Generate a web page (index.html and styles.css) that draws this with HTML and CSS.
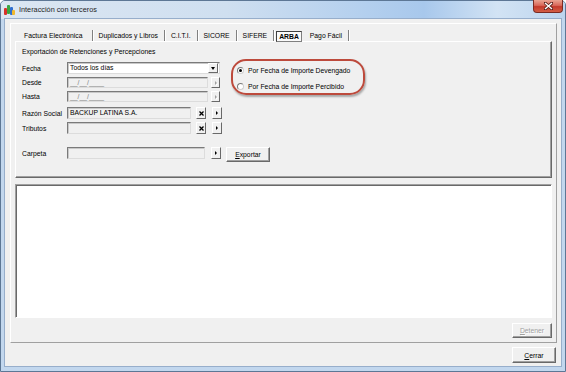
FILE: index.html
```html
<!DOCTYPE html>
<html lang="es">
<head>
  <meta charset="UTF-8" />
  <title>Interacción con terceros</title>
  <link rel="stylesheet" href="styles.css">
</head>
<body>
  <div class="window">
    <div class="titlebar">
      <svg class="app-icon" width="11" height="12" viewBox="0 0 11 12">
        <rect x="0" y="4" width="3" height="7" rx="1" fill="#d8322a"/>
        <rect x="3" y="1" width="3" height="9" rx="1" fill="#3aa641"/>
        <rect x="6" y="3" width="3" height="8" rx="1" fill="#2f6fd0"/>
        <rect x="8" y="6" width="3" height="5" rx="1" fill="#f1b92c"/>
      </svg>
      <span class="title">Interacción con terceros</span>
      <div class="close-btn">
        <svg width="9" height="8" viewBox="0 0 9 8">
          <path d="M1 1 L8 7 M8 1 L1 7" stroke="#5a1f1a" stroke-width="3" stroke-linecap="square"/>
          <path d="M1 1 L8 7 M8 1 L1 7" stroke="#fff" stroke-width="1.5"/>
        </svg>
      </div>
    </div>

    <div class="client">
      <div class="panel">
        <div class="tabs">
          <span class="tab first">Factura Electrónica</span>
          <span class="tab">Duplicados y Libros</span>
          <span class="tab">C.I.T.I.</span>
          <span class="tab">SICORE</span>
          <span class="tab">SIFERE</span>
          <span class="tab active"><b>ARBA</b></span>
          <span class="tab">Pago Fácil</span>
        </div>

        <div class="tab-page">
          <div class="caption">Exportación de Retenciones y Percepciones</div>

          <div class="form">
            <div class="fields">
              <div class="row r-fecha">
                <span class="label">Fecha</span>
                <div class="combo">
                  <span class="combo-text">Todos los días</span>
                  <span class="mini-btn drop"><i class="tri-down"></i></span>
                </div>
              </div>
              <div class="row r-date">
                <span class="label">Desde</span>
                <div class="field date">__/__/____</div>
                <span class="mini-btn off"><i class="tri-right"></i></span>
              </div>
              <div class="row r-date">
                <span class="label">Hasta</span>
                <div class="field date">__/__/____</div>
                <span class="mini-btn off"><i class="tri-right"></i></span>
              </div>
              <div class="row r-razon">
                <span class="label">Razón Social</span>
                <div class="field short">BACKUP LATINA S.A.</div>
                <span class="mini-btn clear">
                  <svg width="5" height="5" viewBox="0 0 5 5"><path d="M0.5 0.5 L4.5 4.5 M4.5 0.5 L0.5 4.5" stroke="#000" stroke-width="1.3"/></svg>
                </span>
                <span class="mini-btn"><i class="tri-right"></i></span>
              </div>
              <div class="row r-trib">
                <span class="label">Tributos</span>
                <div class="field short"></div>
                <span class="mini-btn clear">
                  <svg width="5" height="5" viewBox="0 0 5 5"><path d="M0.5 0.5 L4.5 4.5 M4.5 0.5 L0.5 4.5" stroke="#000" stroke-width="1.3"/></svg>
                </span>
                <span class="mini-btn"><i class="tri-right"></i></span>
              </div>
            </div>

            <div class="radio-box">
              <div class="radio-row"><span class="radio checked"></span>Por Fecha de Importe Devengado</div>
              <div class="radio-row"><span class="radio"></span>Por Fecha de Importe Percibido</div>
            </div>
          </div>

          <div class="row r-carpeta">
            <span class="label">Carpeta</span>
            <div class="field folder"></div>
            <span class="mini-btn"><i class="tri-right"></i></span>
            <button class="btn export"><u>E</u>xportar</button>
          </div>
        </div>

        <div class="memo"></div>

        <div class="actions">
          <button class="btn disabled"><u>D</u>etener</button>
        </div>
      </div>

      <div class="actions bottom">
        <button class="btn"><u>C</u>errar</button>
      </div>
    </div>
  </div>
</body>
</html>
```

FILE: styles.css
```css
:root {
  --face: #f0f0f0;
  --shadow: #a0a0a0;
  --dark: #696969;
  --light: #ffffff;
  --frame: #c2d7ee;
}

* {
  box-sizing: border-box;
}

body {
  margin: 0;
  background: #fff;
  font-family: "Liberation Sans", Arial, sans-serif;
  font-size: 6.8px;
  color: #000;
}

.window {
  width: 566px;
  height: 372px;
  border: 1px solid #5d7795;
  border-radius: 5px 5px 0 0;
  background: var(--frame);
  display: flex;
  flex-direction: column;
}

/* Barra de título */
.titlebar {
  height: 18px;
  display: flex;
  align-items: flex-start;
  background: linear-gradient(to right, #dbe6f2 0%, #cfdff0 40%, #b3cfee 65%, #a8c8ec 75%, #d2e3f4 88%, #bcd4ee 100%);
  border-radius: 4px 4px 0 0;
}

.app-icon {
  margin: 3px 0 0 3px;
}

.title {
  margin: 4px 0 0 4px;
  font-size: 7.3px;
  color: #1e1e1e;
}

.close-btn {
  margin-left: auto;
  margin-right: 2px;
  width: 30px;
  height: 13px;
  margin-top: -1px;
  border: 1px solid #7a2a22;
  border-top: none;
  border-radius: 0 0 4px 4px;
  background: linear-gradient(#e9a493 0%, #d9685a 45%, #c4392c 55%, #d35e45 100%);
  display: flex;
  align-items: center;
  justify-content: center;
}

/* Área cliente */
.client {
  margin: 0 4px;
  height: 347px;
  background: var(--face);
  box-shadow: 0 0 0 1px #97aecb;
  display: flex;
  flex-direction: column;
}

.panel {
  margin: 4px 4px 0 5px;
  padding: 6px 4px 4px 4px;
  border: 1px solid;
  border-color: var(--light) var(--shadow) var(--shadow) var(--light);
}

/* Pestañas */
.tabs {
  height: 11px;
  display: flex;
  align-items: stretch;
}

.tab {
  padding: 0 6px;
  line-height: 11px;
  border-right: 1px solid #808080;
  box-shadow: 1px 0 0 var(--light);
}

.tab.first {
  padding-left: 9px;
  padding-right: 9px;
}

.tab.active {
  padding: 0 2px;
  border-right: none;
  box-shadow: none;
}

.tab.active b {
  display: block;
  padding: 0 2px;
  line-height: 9px;
  margin-top: 1px;
  border: 1px solid;
  border-color: #404040 #808080 #808080 #404040;
  background: #fafafa;
}

.tab-page {
  height: 137px;
  padding: 4px 6px 0 6px;
  border: 1px solid;
  border-color: var(--light) var(--dark) var(--dark) var(--light);
  box-shadow: inset -1px -1px 0 var(--shadow);
}

.caption {
  line-height: 11px;
}

.form {
  margin-top: 2px;
  display: flex;
  align-items: flex-start;
}

.fields {
  padding-top: 3px;
}

.row {
  display: flex;
  align-items: center;
  height: 12px;
}

.r-date {
  height: 11px;
  margin-top: 3px;
}

.r-razon {
  margin-top: 5px;
}

.r-trib {
  margin-top: 3px;
}

.r-carpeta {
  margin-top: 13px;
  height: 15px;
  align-items: flex-start;
}

.label {
  width: 45px;
  flex: none;
  line-height: 11px;
}

.r-carpeta .label {
  margin-top: 1px;
}

/* Campos */
.field,
.combo {
  height: 100%;
  border: 1px solid;
  border-color: #7a7a7a #dcdcdc #dcdcdc #7a7a7a;
  box-shadow: inset 1px 1px 0 #c8c8c8;
  padding-left: 2px;
  line-height: 10px;
  white-space: nowrap;
}

.r-carpeta .field {
  height: 12px;
}

.combo {
  width: 153px;
  background: #fff;
  display: flex;
  align-items: center;
  padding-right: 1px;
}

.combo-text {
  flex: 1;
}

.field.date {
  width: 141px;
  color: #7d7d7d;
}

.field.short {
  width: 124px;
}

.field.folder {
  width: 138px;
}

.mini-btn {
  flex: none;
  width: 10px;
  height: 12px;
  background: var(--face);
  border: 1px solid;
  border-color: var(--light) var(--dark) var(--dark) var(--light);
  display: flex;
  align-items: center;
  justify-content: center;
  margin-left: 6px;
}

.r-date .mini-btn {
  margin-left: 3px;
  height: 11px;
  width: 9px;
}

.mini-btn.clear {
  margin-left: 5px;
}

.combo .mini-btn.drop {
  margin-left: 0;
  height: 10px;
}

.r-carpeta .mini-btn {
  height: 12px;
}

.tri-down {
  width: 0;
  height: 0;
  border-left: 2.5px solid transparent;
  border-right: 2.5px solid transparent;
  border-top: 3px solid #000;
}

.tri-right {
  width: 0;
  height: 0;
  border-top: 2px solid transparent;
  border-bottom: 2px solid transparent;
  border-left: 2px solid #000;
}

.mini-btn.off .tri-right {
  border-left-color: #a0a0a0;
  filter: drop-shadow(1px 1px 0 #fff);
}

/* Opciones */
.radio-box {
  margin: 0 0 0 9px;
  width: 134px;
  height: 36px;
  padding: 4px 0 0 4px;
  border: 2px solid #bd4a3c;
  border-radius: 15px;
  box-shadow: 1px 2px 2px rgba(0, 0, 0, 0.3);
}

.radio-row {
  height: 11px;
  display: flex;
  align-items: center;
  gap: 4px;
}

.radio-row + .radio-row {
  margin-top: 5px;
}

.radio {
  width: 7px;
  height: 7px;
  border-radius: 50%;
  border: 1px solid;
  border-color: #7a7a7a #d0d0d0 #d0d0d0 #7a7a7a;
  background: #fff;
  display: flex;
  align-items: center;
  justify-content: center;
}

.radio.checked::after {
  content: "";
  width: 3px;
  height: 3px;
  border-radius: 50%;
  background: #000;
}

/* Botones */
.btn {
  font: inherit;
  color: #000;
  padding: 0;
  width: 44px;
  height: 15px;
  background: var(--face);
  border: 1px solid;
  border-color: var(--light) var(--dark) var(--dark) var(--light);
  box-shadow: inset -1px -1px 0 var(--shadow);
}

.btn.export {
  margin-left: 5px;
}

.btn.disabled {
  width: 40px;
  color: #a0a0a0;
  text-shadow: 1px 1px 0 #fff;
}

.memo {
  margin-top: 6px;
  height: 134px;
  background: #fff;
  border: 1px solid;
  border-color: #a0a0a0 #fff #fff #a0a0a0;
  box-shadow: inset 1px 1px 0 var(--dark);
}

.actions {
  margin-top: 5px;
  display: flex;
  justify-content: flex-end;
}

.actions.bottom {
  margin: 4px 5px 0 0;
}

.actions.bottom .btn {
  height: 16px;
}
```
